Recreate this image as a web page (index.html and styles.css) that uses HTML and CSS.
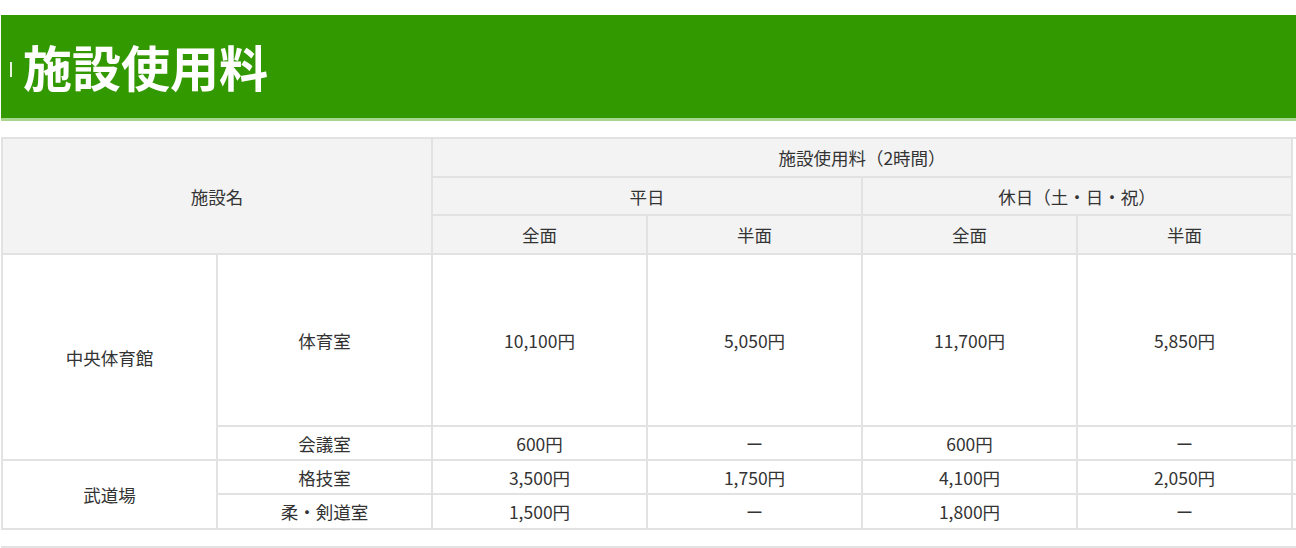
FILE: index.html
```html
<!DOCTYPE html>
<html lang="ja">
<head>
<meta charset="utf-8">
<title>施設使用料</title>
<link rel="stylesheet" href="styles.css">
</head>
<body>
<div class="page">
  <h2 class="title"><span class="mark"></span><span class="title-text">施設使用料</span></h2>
  <div class="table-wrap">
    <table class="fees">
      <colgroup>
        <col class="c"><col class="c"><col class="c"><col class="c"><col class="c"><col class="c"><col class="c">
      </colgroup>
      <thead>
        <tr class="h1">
          <th rowspan="3" colspan="2">施設名</th>
          <th colspan="4">施設使用料（2時間）</th>
          <th rowspan="3" class="extra">備考</th>
        </tr>
        <tr class="h2">
          <th colspan="2">平日</th>
          <th colspan="2">休日（土・日・祝）</th>
        </tr>
        <tr class="h3">
          <th>全面</th>
          <th>半面</th>
          <th>全面</th>
          <th>半面</th>
        </tr>
      </thead>
      <tbody>
        <tr class="r-big">
          <td rowspan="2">中央体育館</td>
          <td>体育室</td>
          <td>10,100円</td>
          <td>5,050円</td>
          <td>11,700円</td>
          <td>5,850円</td>
          <td class="note">全面使用時<br>バスケット2面<br>バレー2面<br>バドミントン8面</td>
        </tr>
        <tr class="r1">
          <td>会議室</td>
          <td>600円</td>
          <td>ー</td>
          <td>600円</td>
          <td>ー</td>
          <td></td>
        </tr>
        <tr class="r2">
          <td rowspan="2">武道場</td>
          <td>格技室</td>
          <td>3,500円</td>
          <td>1,750円</td>
          <td>4,100円</td>
          <td>2,050円</td>
          <td></td>
        </tr>
        <tr class="r3">
          <td>柔・剣道室</td>
          <td>1,500円</td>
          <td>ー</td>
          <td>1,800円</td>
          <td>ー</td>
          <td></td>
        </tr>
      </tbody>
    </table>
    <table class="fees next">
      <colgroup>
        <col class="w2"><col class="w5">
      </colgroup>
      <tr>
        <th></th>
        <th></th>
      </tr>
    </table>
  </div>
</div>
</body>
</html>
```

FILE: styles.css
```css
html, body {
  margin: 0;
  padding: 0;
  background: #fff;
}

body {
  font-family: "Noto Sans CJK JP", "Noto Sans", sans-serif;
  color: #333;
  overflow: hidden;
}

.page {
  padding-top: 15px;
}

.title {
  margin: 0 0 16px 1px;
  height: 103px;
  background: #339900;
  border-bottom: 3px solid #a8d68f;
  display: flex;
  align-items: center;
  color: #fff;
  font-size: 49px;
  font-weight: 700;
  line-height: 1;
}

.mark {
  display: block;
  width: 2px;
  height: 15px;
  background: #e8f3e0;
  margin: 6px 11px 0 9px;
}

.title-text {
  display: block;
  margin-top: -2px;
}

.table-wrap {
  padding-left: 1px;
  width: 1600px;
}

.fees {
  border-collapse: collapse;
  table-layout: fixed;
  width: 1505px;
  font-size: 17.5px;
}

.fees col.c {
  width: 215px;
}

.fees col.w2 {
  width: 430px;
}

.fees col.w5 {
  width: 1075px;
}

.fees th,
.fees td {
  border: 2px solid #e2e2e2;
  text-align: center;
  vertical-align: middle;
  padding: 0 8px;
  font-weight: 400;
  line-height: 1.2;
  box-sizing: border-box;
  white-space: nowrap;
}

.fees th {
  background: #f3f3f3;
}

.fees th.extra {
  background: #fff;
  color: transparent;
}

.h1 th { height: 39px; }
.h2 th { height: 38px; }
.h3 th { height: 39px; }

.r-big td { height: 172px; }
.r1 td { height: 34px; }
.r2 td { height: 34px; }
.r3 td { height: 35px; }

.fees td.note {
  text-align: left;
  padding-left: 3px;
  line-height: 40px;
  color: #999;
}

.next {
  margin-top: 16px;
}

.next th {
  height: 40px;
}
```
